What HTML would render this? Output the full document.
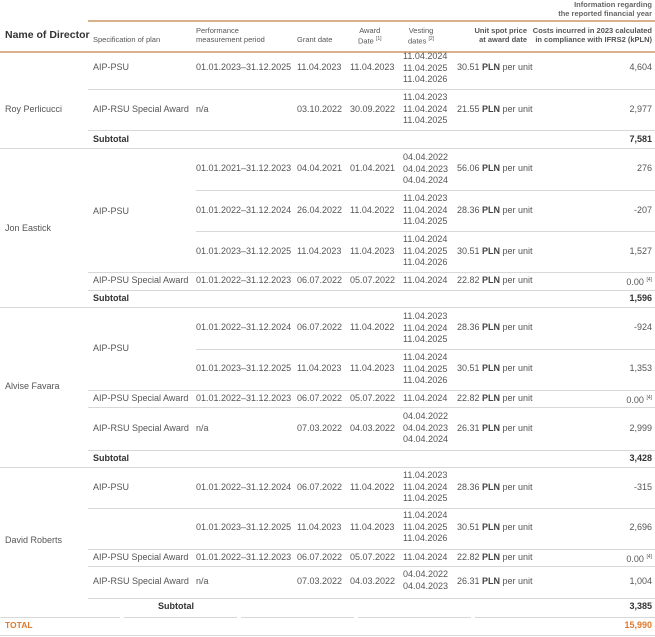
<!DOCTYPE html>
<html><head><meta charset="utf-8"><style>
body{margin:0;width:655px;height:637px;background:#fff;position:relative;overflow:hidden;font-family:"Liberation Sans",Arial,sans-serif}
.t{position:absolute;font-size:9px;line-height:11px;color:#555;white-space:nowrap}
.r{text-align:right;right:3px}
.b{font-weight:bold;color:#333}
.h{position:absolute;font-size:7.5px;line-height:9px;color:#555;white-space:nowrap}
.l{position:absolute;height:1px;background:#d8d8d8}
.o{background:#d9b08c;height:2px}
.v{position:absolute;font-size:9px;line-height:11.5px;color:#555;left:403px}
sup{font-size:5px}
b{color:#444}
</style></head><body>
<div class="h b" style="right:3px;top:0;text-align:right;font-weight:bold;color:#666">Information regarding<br>the reported financial year</div>
<div class="l o" style="left:88px;width:567px;top:20px"></div>
<div class="t b" style="left:5px;top:30px;font-size:10.5px">Name of Director</div>
<div class="h" style="left:93px;top:35px">Specification of plan</div>
<div class="h" style="left:196px;top:26px">Performance<br>measurement period</div>
<div class="h" style="left:297px;top:35px">Grant date</div>
<div class="h" style="left:358px;top:26px;text-align:center">Award<br>Date <sup>[1]</sup></div>
<div class="h" style="left:408px;top:26px;text-align:center">Vesting<br>dates <sup>[2]</sup></div>
<div class="h b" style="left:455px;top:26px;text-align:right;width:72px;color:#555">Unit spot price<br>at award date</div>
<div class="h b" style="right:3px;top:26px;text-align:right;color:#555">Costs incurred in 2023 calculated<br>in compliance with IFRS2 (kPLN)</div>
<div class="l o" style="left:0;width:655px;top:51px"></div>

<div class="t" style="left:5px;top:104px">Roy Perlicucci</div>
<div class="t" style="left:93px;top:62px">AIP-PSU</div>
<div class="t" style="left:196px;top:62px">01.01.2023–31.12.2025</div>
<div class="t" style="left:297px;top:62px">11.04.2023</div>
<div class="t" style="left:350px;top:62px">11.04.2023</div>
<div class="v" style="top:51px">11.04.2024<br>11.04.2025<br>11.04.2026</div>
<div class="t" style="left:457px;top:62px">30.51 <b>PLN</b> per unit</div>
<div class="t r" style="top:62px">4,604</div>
<div class="l" style="left:88px;width:567px;top:89px"></div>
<div class="t" style="left:93px;top:104px">AIP-RSU Special Award</div>
<div class="t" style="left:196px;top:104px">n/a</div>
<div class="t" style="left:297px;top:104px">03.10.2022</div>
<div class="t" style="left:350px;top:104px">30.09.2022</div>
<div class="v" style="top:92px">11.04.2023<br>11.04.2024<br>11.04.2025</div>
<div class="t" style="left:457px;top:104px">21.55 <b>PLN</b> per unit</div>
<div class="t r" style="top:104px">2,977</div>
<div class="l" style="left:88px;width:567px;top:130px"></div>
<div class="t b" style="left:93px;top:134px">Subtotal</div>
<div class="t b r" style="top:134px">7,581</div>
<div class="l" style="left:0;width:655px;top:148px"></div>

<div class="t" style="left:5px;top:223px">Jon Eastick</div>
<div class="t" style="left:93px;top:206px">AIP-PSU</div>
<div class="t" style="left:196px;top:163px">01.01.2021–31.12.2023</div>
<div class="t" style="left:297px;top:163px">04.04.2021</div>
<div class="t" style="left:350px;top:163px">01.04.2021</div>
<div class="v" style="top:152px">04.04.2022<br>04.04.2023<br>04.04.2024</div>
<div class="t" style="left:457px;top:163px">56.06 <b>PLN</b> per unit</div>
<div class="t r" style="top:163px">276</div>
<div class="l" style="left:196px;width:459px;top:190px"></div>
<div class="t" style="left:196px;top:205px">01.01.2022–31.12.2024</div>
<div class="t" style="left:297px;top:205px">26.04.2022</div>
<div class="t" style="left:350px;top:205px">11.04.2022</div>
<div class="v" style="top:193px">11.04.2023<br>11.04.2024<br>11.04.2025</div>
<div class="t" style="left:457px;top:205px">28.36 <b>PLN</b> per unit</div>
<div class="t r" style="top:205px">-207</div>
<div class="l" style="left:196px;width:459px;top:231px"></div>
<div class="t" style="left:196px;top:246px">01.01.2023–31.12.2025</div>
<div class="t" style="left:297px;top:246px">11.04.2023</div>
<div class="t" style="left:350px;top:246px">11.04.2023</div>
<div class="v" style="top:234px">11.04.2024<br>11.04.2025<br>11.04.2026</div>
<div class="t" style="left:457px;top:246px">30.51 <b>PLN</b> per unit</div>
<div class="t r" style="top:246px">1,527</div>
<div class="l" style="left:88px;width:567px;top:272px"></div>
<div class="t" style="left:93px;top:275px">AIP-PSU Special Award</div>
<div class="t" style="left:196px;top:275px">01.01.2022–31.12.2023</div>
<div class="t" style="left:297px;top:275px">06.07.2022</div>
<div class="t" style="left:350px;top:275px">05.07.2022</div>
<div class="t" style="left:403px;top:275px">11.04.2024</div>
<div class="t" style="left:457px;top:275px">22.82 <b>PLN</b> per unit</div>
<div class="t r" style="top:275px">0.00 <sup>[4]</sup></div>
<div class="l" style="left:88px;width:567px;top:290px"></div>
<div class="t b" style="left:93px;top:293px">Subtotal</div>
<div class="t b r" style="top:293px">1,596</div>
<div class="l" style="left:0;width:655px;top:307px"></div>

<div class="t" style="left:5px;top:381px">Alvise Favara</div>
<div class="t" style="left:93px;top:343px">AIP-PSU</div>
<div class="t" style="left:196px;top:322px">01.01.2022–31.12.2024</div>
<div class="t" style="left:297px;top:322px">06.07.2022</div>
<div class="t" style="left:350px;top:322px">11.04.2022</div>
<div class="v" style="top:311px">11.04.2023<br>11.04.2024<br>11.04.2025</div>
<div class="t" style="left:457px;top:322px">28.36 <b>PLN</b> per unit</div>
<div class="t r" style="top:322px">-924</div>
<div class="l" style="left:196px;width:459px;top:349px"></div>
<div class="t" style="left:196px;top:363px">01.01.2023–31.12.2025</div>
<div class="t" style="left:297px;top:363px">11.04.2023</div>
<div class="t" style="left:350px;top:363px">11.04.2023</div>
<div class="v" style="top:352px">11.04.2024<br>11.04.2025<br>11.04.2026</div>
<div class="t" style="left:457px;top:363px">30.51 <b>PLN</b> per unit</div>
<div class="t r" style="top:363px">1,353</div>
<div class="l" style="left:88px;width:567px;top:390px"></div>
<div class="t" style="left:93px;top:393px">AIP-PSU Special Award</div>
<div class="t" style="left:196px;top:393px">01.01.2022–31.12.2023</div>
<div class="t" style="left:297px;top:393px">06.07.2022</div>
<div class="t" style="left:350px;top:393px">05.07.2022</div>
<div class="t" style="left:403px;top:393px">11.04.2024</div>
<div class="t" style="left:457px;top:393px">22.82 <b>PLN</b> per unit</div>
<div class="t r" style="top:393px">0.00 <sup>[4]</sup></div>
<div class="l" style="left:88px;width:567px;top:407px"></div>
<div class="t" style="left:93px;top:423px">AIP-RSU Special Award</div>
<div class="t" style="left:196px;top:423px">n/a</div>
<div class="t" style="left:297px;top:423px">07.03.2022</div>
<div class="t" style="left:350px;top:423px">04.03.2022</div>
<div class="v" style="top:411px">04.04.2022<br>04.04.2023<br>04.04.2024</div>
<div class="t" style="left:457px;top:423px">26.31 <b>PLN</b> per unit</div>
<div class="t r" style="top:423px">2,999</div>
<div class="l" style="left:88px;width:567px;top:450px"></div>
<div class="t b" style="left:93px;top:453px">Subtotal</div>
<div class="t b r" style="top:453px">3,428</div>
<div class="l" style="left:0;width:655px;top:467px"></div>

<div class="t" style="left:5px;top:535px">David Roberts</div>
<div class="t" style="left:93px;top:482px">AIP-PSU</div>
<div class="t" style="left:196px;top:482px">01.01.2022–31.12.2024</div>
<div class="t" style="left:297px;top:482px">06.07.2022</div>
<div class="t" style="left:350px;top:482px">11.04.2022</div>
<div class="v" style="top:470px">11.04.2023<br>11.04.2024<br>11.04.2025</div>
<div class="t" style="left:457px;top:482px">28.36 <b>PLN</b> per unit</div>
<div class="t r" style="top:482px">-315</div>
<div class="l" style="left:88px;width:567px;top:508px"></div>
<div class="t" style="left:196px;top:522px">01.01.2023–31.12.2025</div>
<div class="t" style="left:297px;top:522px">11.04.2023</div>
<div class="t" style="left:350px;top:522px">11.04.2023</div>
<div class="v" style="top:510px">11.04.2024<br>11.04.2025<br>11.04.2026</div>
<div class="t" style="left:457px;top:522px">30.51 <b>PLN</b> per unit</div>
<div class="t r" style="top:522px">2,696</div>
<div class="l" style="left:88px;width:567px;top:549px"></div>
<div class="t" style="left:93px;top:552px">AIP-PSU Special Award</div>
<div class="t" style="left:196px;top:552px">01.01.2022–31.12.2023</div>
<div class="t" style="left:297px;top:552px">06.07.2022</div>
<div class="t" style="left:350px;top:552px">05.07.2022</div>
<div class="t" style="left:403px;top:552px">11.04.2024</div>
<div class="t" style="left:457px;top:552px">22.82 <b>PLN</b> per unit</div>
<div class="t r" style="top:552px">0.00 <sup>[4]</sup></div>
<div class="l" style="left:88px;width:567px;top:566px"></div>
<div class="t" style="left:93px;top:576px">AIP-RSU Special Award</div>
<div class="t" style="left:196px;top:576px">n/a</div>
<div class="t" style="left:297px;top:576px">07.03.2022</div>
<div class="t" style="left:350px;top:576px">04.03.2022</div>
<div class="v" style="top:569px">04.04.2022<br>04.04.2023</div>
<div class="t" style="left:457px;top:576px">26.31 <b>PLN</b> per unit</div>
<div class="t r" style="top:576px">1,004</div>
<div class="l" style="left:88px;width:567px;top:598px"></div>
<div class="t b" style="left:158px;top:601px">Subtotal</div>
<div class="t b r" style="top:601px">3,385</div>
<div class="l" style="left:0;width:120px;top:617px"></div>
<div class="l" style="left:124px;width:113px;top:617px"></div>
<div class="l" style="left:241px;width:113px;top:617px"></div>
<div class="l" style="left:358px;width:113px;top:617px"></div>
<div class="l" style="left:475px;width:180px;top:617px"></div>
<div class="t b" style="left:5px;top:620px;color:#e07a2e;font-size:8.5px">TOTAL</div>
<div class="t b r" style="top:620px;color:#e07a2e">15,990</div>
<div class="l" style="left:0;width:655px;top:635px"></div>
</body></html>
